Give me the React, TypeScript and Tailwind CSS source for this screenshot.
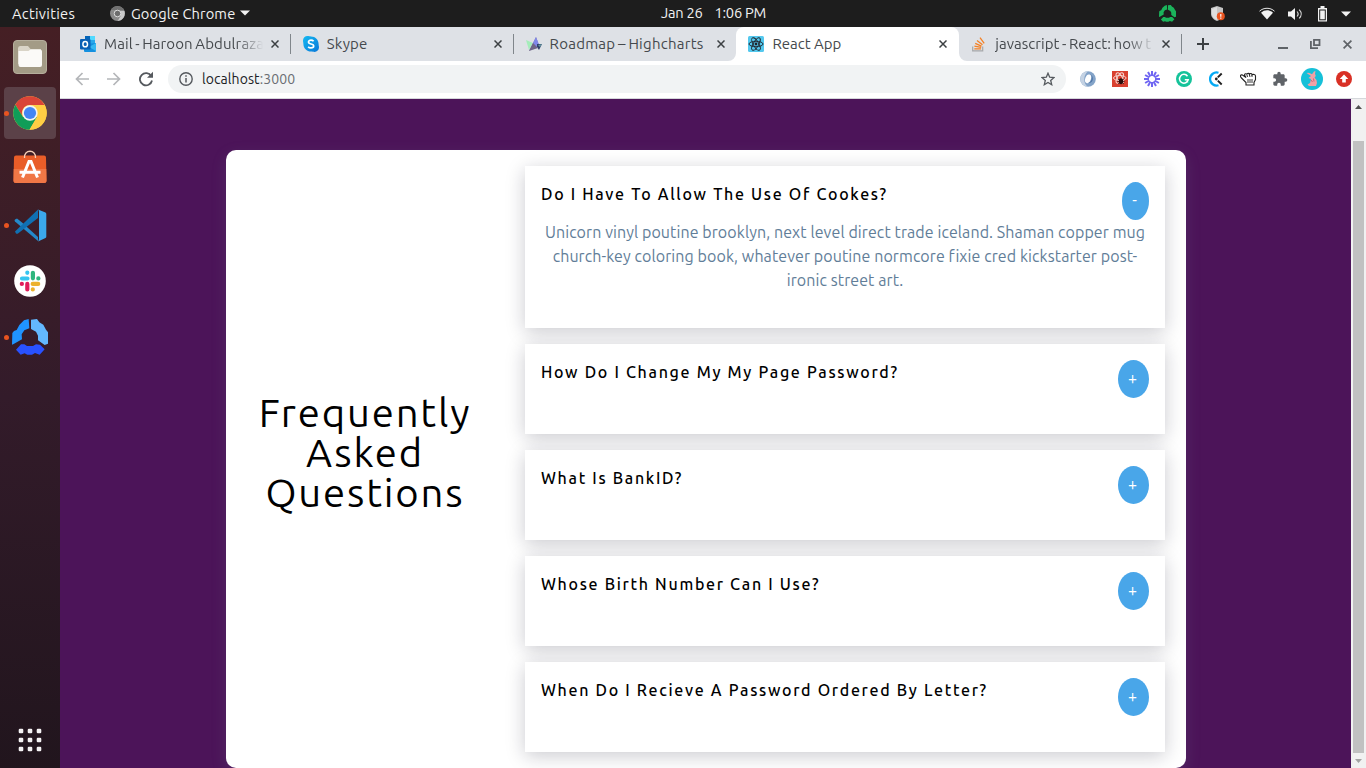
import { useState, type ReactNode } from 'react';

/* ---------- small drawings ---------- */

const Outlook = () => (
  <svg width="16" height="16" viewBox="0 0 16 16">
    <path d="M5 0h10v9H5z" fill="#28a8ea" />
    <path d="M5 0h5v4H5z" fill="#0364b8" />
    <path d="M10 0h5v4h-5z" fill="#50d9ff" />
    <path d="M10 4h5v4h-5z" fill="#28a8ea" />
    <path d="M4 8l12-1v8a1 1 0 0 1-1 1H5a1 1 0 0 1-1-1z" fill="#1490df" />
    <path d="M16 7v8L9 11z" fill="#35b8f1" />
    <rect y="3" width="10.500" height="10.500" rx="1" fill="#0a5fb4" />
    <ellipse cx="5.200" cy="8.200" rx="2.300" ry="2.600" fill="none" stroke="#fff" strokeWidth="1.500" />
  </svg>
);

const Skype = () => (
  <svg width="16" height="16" viewBox="0 0 16 16">
    <defs>
      <linearGradient id="sky" x1="0" y1="0" x2="1" y2="1">
        <stop offset="0" stopColor="#14b9f2" />
        <stop offset="1" stopColor="#0a77d8" />
      </linearGradient>
    </defs>
    <path d="M4.500 0C6 0 6.500.4 8 .4c4.400 0 7.600 3.400 7.600 7.600 0 1.300.4 2 .4 3.300C16 14 14 16 11.500 16c-1.300 0-2-.4-3.300-.4C3.600 15.600.4 12.200.4 8 .4 6.700 0 6 0 4.500 0 2 2 0 4.500 0z" fill="url(#sky)" />
    <path d="M10.600 5.300C9.900 4.500 9 4.200 8 4.200c-1.500 0-2.500.7-2.500 1.800C5.500 8.700 10.700 7.300 10.700 10c0 1.200-1.100 1.900-2.700 1.900-1.200 0-2.200-.4-2.800-1.200" fill="none" stroke="#fff" strokeWidth="1.700" />
  </svg>
);

const Highcharts = () => (
  <svg width="16" height="16" viewBox="0 0 16 16">
    <path d="M0 4l7 3-4 7z" fill="#a4edba" />
    <path d="M10 1l4 11-4-2-7 5z" fill="#7a77a8" />
    <path d="M10 1l-3 6 3 4 4 0z" fill="#8087e8" />
    <path d="M11 8l5 0-3 6-2-3z" fill="#30426b" />
    <path d="M3 15l4-8 5 5z" fill="#6f6587" />
    <path d="M12 9l4-1-2 3z" fill="#6699a1" />
  </svg>
);

const ReactLogo = () => (
  <svg width="16" height="16" viewBox="0 0 16 16">
    <rect width="16" height="16" rx="1.500" fill="#53c8ee" />
    <g fill="none" stroke="#20232a" strokeWidth=".9">
      <ellipse cx="8" cy="8" rx="7" ry="2.700" />
      <ellipse cx="8" cy="8" rx="7" ry="2.700" transform="rotate(60 8 8)" />
      <ellipse cx="8" cy="8" rx="7" ry="2.700" transform="rotate(120 8 8)" />
    </g>
    <circle cx="8" cy="8" r="1.400" fill="#20232a" />
  </svg>
);

const StackOverflow = () => (
  <svg width="16" height="16" viewBox="0 0 16 16" fill="none">
    <path d="M1.700 10.500v4.300h10v-4.300" stroke="#a5a7a9" strokeWidth="1.200" />
    <g stroke="#f48024" strokeWidth="1.300">
      <path d="M3.300 12.800h6.800M3.400 10.200l6.800 1.200M4.200 7.300l6.300 2.800M6 4.500l5.500 4.300M9 1.600l4.200 5.700" />
    </g>
  </svg>
);

const Cross = ({ color = '#3c4043', size = 8 }: { color?: string; size?: number }) => (
  <svg width={size} height={size} viewBox="0 0 8 8">
    <path d="M.5.5l7 7M7.500.5l-7 7" stroke={color} strokeWidth="1.500" />
  </svg>
);

const Ring = ({ size, colors }: { size: number; colors: [string, string, string] }) => (
  <svg width={size} height={size} viewBox="0 0 108 108">
    <path d="M0 77L1 42l5-6 8-3 8-15 14-14 14-4 2 28-15 6-8 12 1 15-25 14z" fill={colors[0]} />
    <path d="M57 2l18-2 7 10 12 7 8 15 6 8v34l-10 4-20-14 0-14-6-12-15-8z" fill={colors[1]} />
    <path d="M12 92l15-16 10 0 8 5 18 0 9-5 12 1 14 14-15 16-14-5-9 5H46l-8-4-12 4z" fill={colors[2]} />
  </svg>
);

/* ---------- desktop bars ---------- */

function TopBar() {
  return (
    <header className="grid h-[27px] shrink-0 grid-cols-[1fr_auto_1fr] items-center bg-[#1d1d1d] text-[14.667px] leading-none text-[#f2f2f2]">
      <div className="flex items-center pl-3">
        <span className="w-[98px] pt-px tracking-[0.300px]">Activities</span>
        <svg className="mr-[6px]" width="15" height="15" viewBox="0 0 15 15">
          <circle cx="7.500" cy="7.500" r="7.500" fill="#8a8a8a" />
          <path d="M1 4a7.500 7.500 0 0 1 13 0H7.500z" fill="#717171" />
          <path d="M14.300 5H7.500l3.200 5-3 5a7.500 7.500 0 0 0 6.600-10z" fill="#c9c9c9" />
          <circle cx="7.500" cy="7.500" r="3.300" fill="#6d6d6d" stroke="#ddd" />
        </svg>
        <span className="w-[104px] pt-px tracking-[0.120px] whitespace-nowrap">Google Chrome</span>
        <svg className="ml-[5px]" width="10" height="6" viewBox="0 0 10 6"><path d="M0 .5h10l-5 5z" fill="#f2f2f2" /></svg>
      </div>
      <div className="flex gap-3 pl-[61px] tracking-[-0.250px]">
        <span>Jan 26</span>
        <span>1:06 PM</span>
      </div>
      <div className="flex items-center justify-end pr-[15px]">
        <Ring size={17} colors={['#1bb35b', '#1bb35b', '#1bb35b']} />
        <svg className="ml-[35px]" width="14" height="16" viewBox="0 0 14 16">
          <path d="M6 0l6 2v6c0 3-3 6-6 7C3 14 0 11 0 8V2z" fill="#c4c4c4" />
          <path d="M6 1v13c-3-1-5-3-5-6V3z" fill="#dedede" />
          <circle cx="9.800" cy="10.300" r="4" fill="#e95420" />
          <path d="M9.800 8v2.800M9.800 11.600v1.200" stroke="#fff" strokeWidth="1.200" />
        </svg>
        <svg className="ml-[34px]" width="16" height="13" viewBox="0 0 16 13">
          <path d="M.5 4.200C4.500.3 11.500.3 15.500 4.200" fill="none" stroke="#e8e8e8" strokeWidth="1" />
          <path d="M2 5.700c3.600-3.300 8.400-3.300 12 0L8 12.500z" fill="#f2f2f2" />
        </svg>
        <svg className="ml-[13px]" width="15" height="14" viewBox="0 0 15 14">
          <path d="M0 4.500h3L7 1v12L3 9.500H0z" fill="#f2f2f2" />
          <path d="M9 4.500c1.300 1.400 1.300 3.600 0 5M11.200 2.600c2.600 2.600 2.600 6.200 0 8.800" fill="none" stroke="#e0e0e0" strokeWidth="1.100" />
        </svg>
        <svg className="ml-[14px]" width="12" height="16" viewBox="0 0 12 16">
          <path d="M3.500 0h4v2h2.500v13.500H1V2h2.500z" fill="#f2f2f2" />
          <path d="M2.200 3.500h6.600v10.800H2.200z" fill="#1d1d1d" />
          <path d="M3.200 4.500h4.600v8.800H3.200z" fill="#f2f2f2" />
        </svg>
        <svg className="ml-3" width="10" height="6" viewBox="0 0 10 6"><path d="M0 .5h10l-5 5z" fill="#f2f2f2" /></svg>
      </div>
    </header>
  );
}

function DockItem({ children, active = false, running = false }: { children: ReactNode; active?: boolean; running?: boolean }) {
  return (
    <div className={`relative flex h-[52px] w-[52px] items-center justify-center rounded-[4px] ${active ? 'bg-[#5b4148]' : ''}`}>
      {running && <span className="absolute top-[24px] left-0 h-[5px] w-[5px] rounded-full bg-[#e95420]" />}
      {children}
    </div>
  );
}

function Dock() {
  return (
    <aside className="flex w-[60px] shrink-0 flex-col items-center gap-1 bg-linear-to-b from-[#451f24] via-[#331b2a] to-[#21151d] pt-1 pb-[2px]">
      <DockItem>
        <svg width="34" height="34" viewBox="0 0 34 34">
          <rect x=".5" y=".5" width="33" height="33" rx="3.500" fill="#a39b86" stroke="#b5ae9c" />
          <path d="M5 8.500Q5 6 7 6h8l2.500 3H28v15H5z" fill="#d9d4c7" />
          <path d="M5.500 11h10l2-1.500H27q2 0 2 2V25q0 2-2 2H7.500q-2 0-2-2z" fill="#fbfaf8" />
        </svg>
      </DockItem>
      <DockItem active running>
        <svg width="34" height="34" viewBox="0 0 34 34">
          <circle cx="17" cy="17" r="16.800" fill="#ffce44" />
          <path d="M2.300 8.800A16.800 16.800 0 0 1 31.600 9H17a8 8 0 0 0-7 12z" fill="#da4437" />
          <path d="M2.300 8.800A16.800 16.800 0 0 0 16.500 33.800L24 21l-14 0z" fill="#109d58" />
          <path d="M31.600 9A16.800 16.800 0 0 1 16.500 33.800L24 21a8 8 0 0 0-1-12z" fill="#ffce44" />
          <circle cx="17" cy="17" r="7.700" fill="#f2f2f2" />
          <circle cx="17" cy="17" r="6.100" fill="#4285f4" />
        </svg>
      </DockItem>
      <DockItem>
        <svg className="mb-1" width="34" height="34" viewBox="0 0 34 34">
          <path d="M3 5.500h28q2 0 2 2l.5 23q0 2.500-2.500 2.500H3Q.5 33 .5 30.500l.5-23q0-2 2-2z" fill="#e95d28" />
          <path d="M.7 19h32.600l.2 11.500q0 2.500-2.500 2.500H3Q.5 33 .5 30.500z" fill="#f07746" />
          <path d="M11.500 8c-1-9 12-9 11 0" fill="none" stroke="#f6cdb4" strokeWidth="1.300" />
          <path d="M9.500 27.500L16 11.500h2l6.500 16M6.500 22.300h21" fill="none" stroke="#fff" strokeWidth="3" />
        </svg>
      </DockItem>
      <DockItem running>
        <svg width="33" height="33" viewBox="0 0 33 33">
          <path d="M3 9.500l5 4L24 28l0 4L1 12.500q-1-1 0-2z" fill="#2489ca" />
          <path d="M1 22.500L24 .5V9L4 24.500q-1 .7-2 0z" fill="#1070b3" />
          <path d="M24 .5l7.500 3q.8.500.8 1.500v22.500q0 1-.8 1.500l-7.500 3.500q1-1 1-3V3q0-2-1-2.500z" fill="#3ba8ec" />
        </svg>
      </DockItem>
      <DockItem>
        <svg width="32" height="32" viewBox="0 0 32 32">
          <circle cx="16" cy="16" r="15.800" fill="#fff" />
          <g strokeLinecap="round" strokeWidth="4.200" fill="none">
            <path d="M8 13.500h5.500M13.300 7.700v.1" stroke="#36c5f0" />
            <path d="M18.900 7.800v5.500M24.300 13.400h.1" stroke="#2eb67d" />
            <path d="M18.700 18.900h5.500M18.800 24.300v.1" stroke="#ecb22e" />
            <path d="M13.300 18.900v5.500M7.800 18.900h.1" stroke="#e01e5a" />
          </g>
        </svg>
      </DockItem>
      <DockItem running>
        <Ring size={36} colors={['#2094ff', '#63b8ff', '#2952ff']} />
      </DockItem>
      <div className="mt-auto">
        <DockItem>
          <svg width="24" height="24" viewBox="0 0 24 24" fill="#f5f3f4">
            {[3, 12, 21].map((y) => [3, 12, 21].map((x) => <rect key={`${x}-${y}`} x={x - 2.3} y={y - 2.3} width="4.600" height="4.600" rx="1.200" />))}
          </svg>
        </DockItem>
      </div>
    </aside>
  );
}

/* ---------- browser ---------- */

function Tab({ icon, title, active = false, fade = false, divider = false, spacing = '' }: { icon: ReactNode; title: string; active?: boolean; fade?: boolean; divider?: boolean; spacing?: string }) {
  return (
    <div className={`relative flex h-[34px] w-[222.800px] items-center pl-3 ${active ? 'rounded-t-[8px] bg-white' : ''}`}>
      <span className="mr-2 shrink-0">{icon}</span>
      <span className={`w-[161px] overflow-hidden text-[15px] leading-[20px] whitespace-nowrap text-[#45494d] ${spacing} ${fade ? 'mask-[linear-gradient(to_right,#000_82%,transparent_99%)]' : ''}`}>{title}</span>
      <span className="ml-[6px]"><Cross /></span>
      {divider && <span className="absolute top-[7px] right-0 h-5 w-px bg-[#80868b]" />}
      {active && (
        <>
          <svg className="absolute bottom-0 -left-2" width="8" height="8"><path d="M8 0v8H0a8 8 0 0 0 8-8z" fill="#fff" /></svg>
          <svg className="absolute -right-2 bottom-0" width="8" height="8"><path d="M0 0v8h8a8 8 0 0 1-8-8z" fill="#fff" /></svg>
        </>
      )}
    </div>
  );
}

function TabStrip() {
  return (
    <div className="flex h-[34px] shrink-0 items-center bg-[#dee1e6] pl-2">
      <Tab icon={<Outlook />} title="Mail - Haroon Abdulraza" fade divider spacing="tracking-[0.100px] [word-spacing:-1px]" />
      <Tab icon={<Skype />} title="Skype" divider spacing="tracking-[0.200px]" />
      <Tab icon={<Highcharts />} title="Roadmap – Highcharts" spacing="tracking-[0.250px] [word-spacing:-1px]" />
      <Tab icon={<ReactLogo />} title="React App" active />
      <Tab icon={<StackOverflow />} title="javascript - React: how t" fade divider spacing="tracking-[0.050px] [word-spacing:-1px]" />
      <svg className="ml-[14px]" width="14" height="14" viewBox="0 0 14 14"><path d="M7 1v12M1 7h12" stroke="#3c4043" strokeWidth="2" /></svg>
      <div className="ml-auto flex items-center gap-[22px] pr-[14px]">
        <svg width="10" height="10" viewBox="0 0 10 10"><path d="M0 9h10" stroke="#5f6368" strokeWidth="2" /></svg>
        <svg width="11" height="10" viewBox="0 0 11 10" fill="none" stroke="#5f6368" strokeWidth="1.800">
          <path d="M4 .9h5.500v5.200H4zM.9 2v7.100H8" />
        </svg>
        <Cross color="#5f6368" size={9} />
      </div>
    </div>
  );
}

function Extensions() {
  return (
    <div className="flex items-center gap-4">
      <svg width="16" height="16" viewBox="0 0 16 16">
        <circle cx="8" cy="8" r="7.800" fill="#83a3c8" />
        <path d="M8 .2a7.800 7.800 0 0 0 0 15.600C3 13 3 4 8 .2z" fill="#c4d2e3" />
        <ellipse cx="8" cy="7.800" rx="2.800" ry="4.500" fill="#fff" transform="rotate(20 8 8)" />
        <path d="M10 3c3 2 2 8-2 9 5 1 7-6 2-9z" fill="#4f75a6" />
      </svg>
      <svg width="16" height="16" viewBox="0 0 16 16">
        <rect width="16" height="16" fill="#d9402f" />
        <g fill="none" stroke="#f5d3ce" strokeWidth="1">
          <ellipse cx="7.800" cy="7" rx="6.300" ry="2.500" />
          <ellipse cx="7.800" cy="7" rx="5.800" ry="2.500" transform="rotate(60 7.800 7)" />
          <ellipse cx="7.800" cy="7" rx="5.800" ry="2.500" transform="rotate(120 7.800 7)" />
        </g>
        <ellipse cx="9" cy="10.300" rx="2.200" ry="3" fill="#2b0d0a" />
        <path d="M6 8l6 5M12 8l-6 5M5.500 10.500h7" stroke="#2b0d0a" strokeWidth=".7" />
      </svg>
      <svg width="16" height="16" viewBox="0 0 16 16" stroke="#6f66f2" strokeWidth="2">
        <path d="M8 0v5M8 11v5M0 8h5M11 8h5M4 1.100l2.500 4.300M9.500 10.600l2.500 4.300M1.100 4l4.300 2.500M10.600 9.500l4.300 2.500M1.100 12l4.300-2.500M10.600 6.500L14.900 4M4 14.900l2.500-4.300M9.500 5.400L12 1.100" />
      </svg>
      <svg width="16" height="16" viewBox="0 0 16 16" fill="none" stroke="#fff" strokeWidth="1.500">
        <circle cx="8" cy="8" r="8" fill="#15c39a" stroke="none" />
        <path d="M11.500 5.200A4.400 4.400 0 1 0 12.200 8.800H8.800M11.500 8.500v3" />
      </svg>
      <svg width="16" height="16" viewBox="0 0 16 16" fill="none" strokeWidth="2.200">
        <path d="M10.500 1.800A6.500 6.500 0 1 0 10.500 14.200" stroke="#03a9f4" />
        <path d="M9.800 6.400l3.900-3.900M9.800 9.600l3.900 3.900" stroke="#222" strokeWidth="1.900" />
        <circle cx="8.300" cy="8" r="1.400" fill="#222" />
      </svg>
      <svg width="17" height="16" viewBox="0 0 17 16" fill="#fff" stroke="#222" strokeWidth="1.100">
        <path d="M6 14v-2.500L1.500 7C-.5 5 .5 3.500 2.500 4L6 6.500 4.500 4C4.500 2.500 6.500 2.500 7 3.500 7 2 9.300 2 9.500 3.300 10 2 12 2.300 12 3.800 13 3 15.500 3.500 15.500 5v3.500L14 11.500V14z" />
        <path d="M8 8v4M10 8v4M12 8v4M7 4l.5 2M9.500 4l.5 2M12 4v2" strokeWidth=".9" />
      </svg>
      <svg width="16" height="16" viewBox="0 0 24 24" fill="#5f6368" className="-ml-px">
        <path d="M20.500 11H19V7c0-1.100-.9-2-2-2h-4V3.500a2.500 2.500 0 0 0-5 0V5H4c-1.100 0-2 .9-2 2v3.800h1.500a2.700 2.700 0 0 1 0 5.400H2V20c0 1.100.9 2 2 2h3.800v-1.500a2.700 2.700 0 0 1 5.400 0V22H17c1.100 0 2-.9 2-2v-4h1.500a2.500 2.500 0 0 0 0-5z" />
      </svg>
      <svg width="22" height="22" viewBox="0 0 22 22" className="-mx-[3px]">
        <circle cx="11" cy="11" r="11" fill="#16c0d8" />
        <path d="M5.500 5Q8 4 11 6.200L13 3.500l1.500-.5-.5 3q1.500 2-.5 3.500 2.500 2 2.500 5.500l-1 3H8L6.500 16.500l2.500-1.500 1-4-2.500-1L10 8z" fill="#f2a1a6" />
        <path d="M10 12l1.500 2M12.500 10.500l.5 3" stroke="#cf6578" />
      </svg>
      <svg width="16" height="16" viewBox="0 0 16 16">
        <circle cx="8" cy="8" r="8" fill="#d93025" />
        <path d="M8 3.500l4.300 4.500H9.800v3.500H6.200V8H3.700z" fill="#fff" />
      </svg>
    </div>
  );
}

function Toolbar() {
  return (
    <div className="flex h-[38px] shrink-0 items-center border-b border-[#d5d7db] bg-white pr-[14px] pb-px pl-[15px]">
      <svg width="14" height="14" viewBox="0 0 14 14" fill="none" stroke="#b4b6b9" strokeWidth="1.700"><path d="M14 7H1.500M7.500 1L1.500 7l6 6" /></svg>
      <svg className="ml-[18px]" width="14" height="14" viewBox="0 0 14 14" fill="none" stroke="#b4b6b9" strokeWidth="1.700"><path d="M0 7h12.500M6.500 1l6 6-6 6" /></svg>
      <svg className="ml-[17px]" width="16" height="16" viewBox="0 0 16 16">
        <path d="M13.300 5.200A6.100 6.100 0 1 0 14 9.500" fill="none" stroke="#55595e" strokeWidth="1.800" />
        <path d="M15 .8v6H9z" fill="#55595e" />
      </svg>
      <div className="mr-[14px] ml-[14px] flex h-7 flex-1 items-center rounded-full bg-[#f1f3f4] pr-[11px] pl-[11px]">
        <svg width="14" height="14" viewBox="0 0 14 14" fill="none" stroke="#55595e" strokeWidth="1.400">
          <circle cx="7" cy="7" r="6.200" /><path d="M7 6v4.500M7 3.300v1.400" strokeWidth="1.500" />
        </svg>
        <span className="ml-[9px] text-[14px] leading-none tracking-[0.080px] text-[#202124]">localhost<span className="text-[#6a6e73]">:3000</span></span>
        <svg className="ml-auto" width="14" height="14" viewBox="0 0 14 14" fill="none" stroke="#55595e" strokeWidth="1.300">
          <path d="M7 1.200l1.700 4 4.300.4-3.300 2.900 1 4.200L7 10.500l-3.700 2.200 1-4.200L1 5.600l4.300-.4z" />
        </svg>
      </div>
      <Extensions />
    </div>
  );
}

function Scrollbar() {
  return (
    <div className="flex w-[15px] shrink-0 flex-col items-center bg-[#f1f1f1]">
      <svg width="15" height="15" viewBox="0 0 15 15"><path d="M4 10l3.500-4 3.500 4z" fill="#505050" /></svg>
      <div className="mt-[27px] w-[11px] flex-1 bg-[#c1c1c1]" />
      <svg width="15" height="15" viewBox="0 0 15 15"><path d="M4 6l3.500 4L11 6z" fill="#a3a3a3" /></svg>
    </div>
  );
}

/* ---------- page ---------- */

const answer = 'Unicorn vinyl poutine brooklyn, next level direct trade iceland. Shaman copper mug church-key coloring book, whatever poutine normcore fixie cred kickstarter post-ironic street art.';

const questions = [
  'Do I Have To Allow The Use Of Cookes?',
  'How Do I Change My My Page Password?',
  'What Is BankID?',
  'Whose Birth Number Can I Use?',
  'When Do I Recieve A Password Ordered By Letter?',
];

function Question({ title, open, onToggle }: { title: string; open: boolean; onToggle: () => void }) {
  return (
    <article className={`bg-white p-4 shadow-[0_4px_18px_rgba(20,20,40,0.220)] ${open ? 'h-[162px]' : 'h-[90px]'}`}>
      <div className="flex h-[38px] items-start justify-between">
        <h2 className="text-[16px] leading-6 font-medium tracking-[1.690px] text-black">{title}</h2>
        <button
          onClick={onToggle}
          className={`h-[38px] rounded-[50%] bg-[#49a6e9] pr-[2px] pb-[2px] text-center text-[16px] leading-[36px] text-white ${open ? 'w-[27px]' : 'w-[31px]'}`}
        >
          {open ? '-' : '+'}
        </button>
      </div>
      {open && <p className="text-center text-[16px] leading-6 tracking-[0.085px] text-[#617d98]">{answer}</p>}
    </article>
  );
}

function Faq() {
  const [openIndex, setOpenIndex] = useState(0);
  return (
    <main className="flex-1 overflow-hidden bg-[#4c1459] pt-[51px] pl-[166px]">
      <section className="flex h-[618px] w-[960px] rounded-[10px] bg-white shadow-[0_5px_15px_rgba(109,127,149,0.200)]">
        <div className="flex w-[299px] items-center pr-[21px] pb-3">
          <h1 className="w-full px-6 text-center text-[40px] leading-10 tracking-[1.850px] text-black">Frequently Asked Questions</h1>
        </div>
        <div className="flex w-[640px] flex-col gap-4 pt-4">
          {questions.map((title, i) => (
            <Question key={title} title={title} open={openIndex === i} onToggle={() => setOpenIndex(openIndex === i ? -1 : i)} />
          ))}
        </div>
      </section>
    </main>
  );
}

export default function App() {
  return (
    <div className="flex h-screen w-full flex-col overflow-hidden font-['Ubuntu','Noto_Sans',sans-serif]">
      <TopBar />
      <div className="flex min-h-0 flex-1">
        <Dock />
        <div className="flex min-w-0 flex-1 flex-col">
          <TabStrip />
          <Toolbar />
          <div className="flex min-h-0 flex-1">
            <Faq />
            <Scrollbar />
          </div>
        </div>
      </div>
    </div>
  );
}
